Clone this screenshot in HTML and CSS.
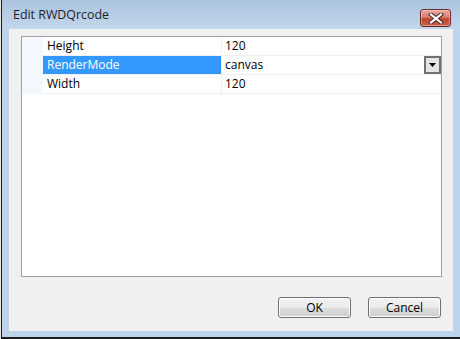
FILE: index.html
```html
<!DOCTYPE html>
<html>
<head>
<meta charset="utf-8">
<link rel="stylesheet" href="styles.css">
</head>
<body>
<div class="window">
  <div class="titlebar">
    <span class="title">Edit RWDQrcode</span>
    <div class="close">
      <svg width="16" height="11" viewBox="0 0 16 11">
        <path d="M3 1.5 L13 9.5 M13 1.5 L3 9.5" stroke="#4a2a2a" stroke-width="4.2" stroke-linecap="square"/>
        <path d="M3 1.5 L13 9.5 M13 1.5 L3 9.5" stroke="#ffffff" stroke-width="2.2" stroke-linecap="square"/>
      </svg>
    </div>
  </div>
  <div class="client">
    <div class="grid">
      <div class="row">
        <div class="margin"></div>
        <div class="label">Height</div>
        <div class="value">120</div>
      </div>
      <div class="row selected">
        <div class="margin"></div>
        <div class="label">RenderMode</div>
        <div class="value">canvas
          <span class="drop"><svg width="8" height="4" viewBox="0 0 8 4"><path d="M0 0 H7 L3.5 4 Z" fill="#000"/></svg></span>
        </div>
      </div>
      <div class="row">
        <div class="margin"></div>
        <div class="label">Width</div>
        <div class="value">120</div>
      </div>
    </div>
    <div class="buttons">
      <button class="btn">OK</button>
      <button class="btn">Cancel</button>
    </div>
  </div>
</div>
</body>
</html>
```
FILE: styles.css
```css
html, body {
  margin: 0;
  padding: 0;
  background: #e6e6e6;
}
body {
  width: 460px;
  height: 339px;
  overflow: hidden;
  font-family: "Open Sans", "Noto Sans", sans-serif;
  font-size: 12px;
}
.window {
  margin-left: 1px;
  width: 458px;
  height: 337px;
  border-left: 1px solid #1c1c1c;
  border-bottom: 2px solid #1c1c1c;
  background: #bcd4ec;
  display: flex;
  flex-direction: column;
  position: relative;
}
.titlebar {
  height: 29px;
  flex: none;
  background: linear-gradient(#aac3df, #c3d7ec);
  display: flex;
  align-items: flex-start;
  position: relative;
}
.title {
  margin: 6px 0 0 11px;
  color: #1e1e1e;
  font-size: 12.4px;
  line-height: 17px;
}
.close {
  position: absolute;
  left: 418px;
  top: 9px;
  width: 29px;
  height: 16px;
  border: 1px solid #6b2a2a;
  border-radius: 3px;
  background: linear-gradient(#e8a69a 0%, #d9806f 45%, #c0432f 55%, #c9614c 100%);
  display: flex;
  align-items: center;
  justify-content: center;
  box-shadow: inset 0 0 0 1px rgba(255,255,255,0.35);
}
.client {
  margin: 0 7px 0 7px;
  height: 302px;
  background: #f0f0f0;
  padding: 7px 11px 0 12px;
  box-sizing: border-box;
  display: flex;
  flex-direction: column;
}
.grid {
  height: 241px;
  border: 1px solid #a0a0a0;
  background: #ffffff;
  box-sizing: border-box;
  display: flex;
  flex-direction: column;
}
.row {
  display: grid;
  grid-template-columns: 21px 179px 1fr;
  height: 19px;
  color: #000;
}
.margin {
  background: #f4f7fc;
}
.label {
  padding-left: 4px;
  line-height: 18px;
  border-bottom: 1px solid #f0f0f0;
  border-right: 1px solid #f0f0f0;
}
.value {
  padding-left: 3px;
  line-height: 18px;
  border-bottom: 1px solid #f0f0f0;
  position: relative;
}
.selected .label {
  background: #3399ff;
  color: #ffffff;
}
.drop {
  position: absolute;
  right: 0;
  top: 0;
  width: 13px;
  height: 14px;
  border: 2px solid #707070;
  background: #e4e4e4;
  display: flex;
  align-items: center;
  justify-content: center;
}
.buttons {
  display: flex;
  justify-content: flex-end;
  gap: 17px;
  margin-top: 20px;
  padding-right: 1px;
}
.btn {
  width: 73px;
  height: 21px;
  margin: 0;
  border: 1px solid #707070;
  border-radius: 3px;
  background: linear-gradient(#f2f2f2 0%, #ebebeb 50%, #dddddd 51%, #cfcfcf 100%);
  font-family: "Open Sans", "Noto Sans", sans-serif;
  font-size: 12px;
  color: #000;
  padding: 0;
  box-shadow: inset 0 0 0 1px #fcfcfc;
}
```
